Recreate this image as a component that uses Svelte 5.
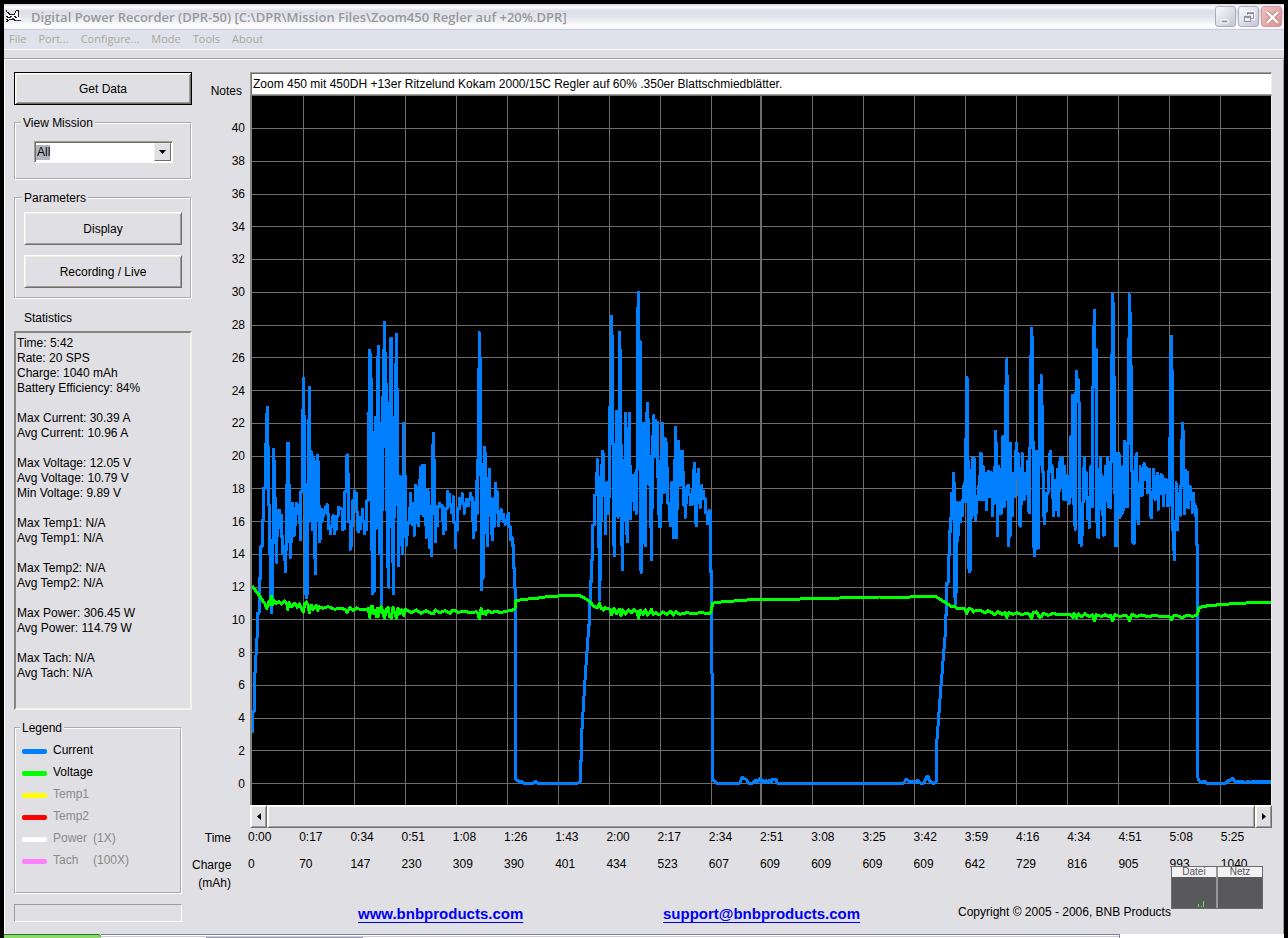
<script>
  const menus = ['File', 'Port…', 'Configure…', 'Mode', 'Tools', 'About'];
  const stats = [
    'Time: 5:42',
    'Rate: 20 SPS',
    'Charge: 1040 mAh',
    'Battery Efficiency: 84%',
    '',
    'Max Current: 30.39 A',
    'Avg Current: 10.96 A',
    '',
    'Max Voltage: 12.05 V',
    'Avg Voltage: 10.79 V',
    'Min Voltage: 9.89 V',
    '',
    'Max Temp1: N/A',
    'Avg Temp1: N/A',
    '',
    'Max Temp2: N/A',
    'Avg Temp2: N/A',
    '',
    'Max Power: 306.45 W',
    'Avg Power: 114.79 W',
    '',
    'Max Tach: N/A',
    'Avg Tach: N/A'
  ].join('\n');
  const legend = [
    { name: 'Current', scale: '', color: '#0080ff', on: true },
    { name: 'Voltage', scale: '', color: '#00ff00', on: true },
    { name: 'Temp1', scale: '', color: '#ffff00', on: false },
    { name: 'Temp2', scale: '', color: '#ff0000', on: false },
    { name: 'Power', scale: '(1X)', color: '#ffffff', on: false },
    { name: 'Tach', scale: '(100X)', color: '#ff80ff', on: false }
  ];
  const levels = Array.from({ length: 21 }, (_, i) => 40 - 2 * i);
  const times = ['0:00', '0:17', '0:34', '0:51', '1:08', '1:26', '1:43', '2:00', '2:17', '2:34', '2:51', '3:08', '3:25', '3:42', '3:59', '4:16', '4:34', '4:51', '5:08', '5:25'];
  const charges = [0, 70, 147, 230, 309, 390, 401, 434, 523, 607, 609, 609, 609, 609, 642, 729, 816, 905, 993, 1040];

  const gridX = Array.from({ length: 19 }, (_, i) => 303 + 51 * i - (i > 8 ? 1 : 0));
  const gridY = levels.map((v) => Math.round(783 - v * 16.375));

  // Traces are sampled per flight; each run carries its own origin, three units to a plot unit.
  const parse = (ox, pts) => pts.trim().split(/\s+/).map((p) => {
    const [x, y] = p.split(',').map(Number);
    return [ox + x / 3, 280 + y / 3];
  });
  const join = (pts) => pts.map(([x, y]) => `${x.toFixed(1)},${y.toFixed(1)}`).join(' ');
  const at = (ox, pts) => join(parse(ox, pts));

  // Steep jumps between neighbouring samples are drawn as upright bars that meet halfway.
  const bars = (ox, pts) => {
    const src = parse(ox, pts);
    const out = [src[0]];
    for (let i = 1; i < src.length; i++) {
      const [x0, y0] = src[i - 1];
      const [x1, y1] = src[i];
      if (x1 - x0 < 3 && Math.abs(y1 - y0) > 3) {
        const mid = (y0 + y1) / 2;
        out.push([x0, mid], [x1, mid]);
      }
      out.push(src[i]);
    }
    return join(out);
  };

  const run1 = bars(248, `12,1359 18,1230 28,1060 33,940 38,850 42,750 47,690 52,560 56,425 58,381 61,620 64,730 67,910 70,998 73,940 75,620 77,507 80,580 83,730 86,847 89,690 92,742 95,690 100,720 104,820 108,800 112,876 116,740 119,490 122,490 125,740 127,832 131,740 134,669 138,768 142,700 146,669 150,700 154,675 158,780 162,490 166,294 169,520 171,700 173,930 176,954 179,930 181,520 184,322 187,720 190,515 194,750 196,530 199,785 202,882 205,560 208,525 212,570 214,785 218,765 222,687 226,707 232,687 238,674 242,730 248,762 252,715 256,707 260,762 265,735 270,682 276,685 282,688 284,750 290,740 294,530 298,525 302,640 306,810 310,785 314,690 320,634 325,645 328,745 332,755 338,735 344,688 350,761 356,735 360,590 364,211 367,230 369,360 371,680 374,942 378,928 380,500 383,412 385,745 388,262 391,199 393,820 396,430 399,975 402,352 404,690 406,292 409,127 412,312 414,690 416,312 419,800 422,922 424,560 426,177 430,175 433,750 437,942 439,480 441,342 446,163 449,490 452,858 457,590 461,770 464,822 467,429 471,740 474,797 478,735 484,728 488,639 493,700 498,767 502,615 506,622 508,720 512,738 515,640 518,562 520,700 522,556 527,708 530,556 533,700 535,772 540,632 545,780 550,828 553,530 556,460 560,620 563,785 568,690 575,669 582,682 587,762 593,735 598,634 604,652 609,698 616,650 622,803 628,700 634,672 642,640 648,702 655,657 662,678 668,640 672,662 677,773 682,728 686,604 688,700 690,380 694,158 698,310 699,860 701,929 705,860 707,600 709,502 713,540 716,720 718,797 722,620 725,568 729,740 733,780 738,700 743,610 748,660 751,737 756,700 760,689 766,715 772,733 778,710 782,699 787,780 792,772 797,820 800,910 803,940 803,1495`);
  const run2 = bars(500, `240,1506 244,1380 255,1200 264,1070 268,1000 270,930 274,880 278,800 283,670 288,620 292,539 295,640 297,960 299,960 302,840 304,600 307,514 311,530 316,762 320,608 323,700 325,688 327,610 329,650 334,109 337,225 340,760 343,828 345,495 347,700 349,394 351,700 354,712 358,157 361,265 363,720 367,870 371,540 373,720 376,400 380,740 383,785 385,490 388,400 392,717 396,605 400,585 404,690 406,580 408,702 411,440 412,130 416,37 420,330 421,860 424,877 427,520 431,430 433,780 437,797 439,430 442,370 446,465 448,590 450,640 454,839 458,530 461,407 465,530 467,422 471,590 473,428 475,660 479,740 482,740 484,600 487,430 491,637 495,475 498,635 500,490 503,640 508,700 511,738 515,608 517,700 519,772 522,540 524,772 526,442 530,772 532,600 535,483 537,600 540,618 542,530 545,514 548,514 551,640 556,712 560,625 565,616 570,673 577,673 580,590 584,550 587,720 589,737 592,600 596,568 601,682 605,617 611,650 616,662 622,732 627,692 631,700 632,870 635,880 636,1480`);
  const run3 = bars(920, `48,1506 50,1390 62,1230 76,1060 79,950 84,870 88,780 92,730 95,700 100,580 103,640 104,930 106,972 109,900 112,668 114,768 119,668 122,726 127,690 130,630 134,608 136,665 139,292 143,300 144,780 146,850 148,876 152,860 154,570 156,660 158,534 162,535 164,690 167,719 170,680 175,620 178,660 180,520 182,650 184,521 187,660 190,560 193,660 196,580 200,690 203,610 205,573 208,650 211,580 214,578 217,707 221,580 223,670 226,454 230,525 233,767 236,560 239,700 241,568 244,700 248,470 252,680 256,320 258,660 260,239 263,340 265,680 266,797 270,740 272,490 275,700 277,707 280,580 283,650 286,540 290,490 294,550 298,735 301,738 303,610 307,521 310,660 313,658 316,580 320,640 322,543 325,690 328,698 331,310 334,145 338,200 340,770 344,828 346,515 348,800 350,515 352,805 355,803 357,315 361,550 364,287 368,470 370,680 373,732 378,660 384,620 388,530 391,514 396,600 401,707 405,600 408,690 412,568 416,707 418,560 421,533 424,620 427,535 431,658 434,560 437,660 441,585 444,665 447,672 450,590 452,470 454,650 457,346 460,620 462,720 466,748 467,405 470,274 474,320 477,410 479,780 483,797 486,740 489,600 493,533 498,620 503,690 508,742 512,560 517,680 517,460 520,184 524,91 528,325 530,680 532,770 536,772 538,600 541,533 546,640 549,765 553,765 556,560 559,620 562,533 566,680 572,683 575,410 577,42 581,100 583,480 585,797 589,797 592,520 594,700 597,521 600,712 603,580 606,702 608,560 610,690 614,484 616,680 619,490 622,680 624,310 628,44 632,155 635,365 637,780 642,792 646,540 650,521 653,700 656,732 660,560 666,648 669,560 672,550 675,600 678,562 682,638 685,570 688,568 690,700 695,714 700,568 703,650 706,658 709,600 712,580 714,690 717,590 720,640 723,582 725,640 728,588 731,678 734,600 737,598 742,678 744,600 747,678 750,270 754,169 758,380 758,720 761,780 764,839 768,608 770,740 773,750 775,640 778,700 782,705 784,530 788,430 791,475 792,690 794,702 797,570 800,680 803,578 806,683 811,620 816,698 821,640 825,708 828,685 830,760 832,830 833,1490`);
  const current = [
    run1,
    '516,780 518,780 520,783 521,781 523,783 534,783 535,781 537,783 578,783',
    run2,
    '712,780 714,780 716,783 740,783 742,777 745,779 747,780 748,783 753,783 756,780 758,782 760,778 762,783 763,780 765,783 766,780 768,783 769,780 771,783 772,779 774,780 776,779 777,783 904,783 906,779 908,780 910,783 912,781 914,783 916,782 918,780 920,783 924,783 926,778 928,776 929,780 932,783 935,783',
    run3,
    '1199,781 1202,783 1204,781 1206,783 1226,783 1229,780 1231,780 1232,778 1234,780 1236,783 1238,781 1240,783 1242,781 1244,783 1246,782 1248,781 1251,783 1253,781 1255,783 1257,781 1259,783 1261,781 1263,783 1265,781 1267,783 1269,781 1272,783'
  ].join(' ');

  const voltage = [
    at(248, `12,918 28,938 42,960 50,970 57,985 62,965 66,975 70,949 74,975 78,960 84,970 92,965 100,972 110,963 116,970 119,988 124,968 130,980 140,970 148,982 154,972 160,985 166,996 170,972 175,966 180,975 184,999 190,975 195,990 204,975 209,991 214,980 225,985 240,980 260,988 275,984 290,988 298,997 306,983 315,992 325,984 340,990 358,988 361,985 365,1012 369,980 373,979 377,1000 381,990 385,1009 388,985 391,1010 395,990 400,980 405,1000 410,1015 414,990 420,982 425,1010 430,1014 435,982 440,1000 446,1014 450,986 455,1000 460,990 467,1006 471,988 480,992 490,998 505,990 520,1000 535,992 545,998 557,1002 562,990 575,998 590,992 605,1000 615,990 630,997 650,994 670,999 685,995 690,1000 694,1016 699,986 704,1000 710,995 713,1003 720,992 730,998 745,993 755,998 770,995 780,993 795,990 801,985 803,962 815,960 840,957`),
    at(500, `110,955 140,950 175,948 215,945 240,947 255,955 270,965 280,978 292,983 298,970 304,985 310,990 315,983 330,988 335,1004 342,985 349,1001 358,988 363,1007 368,990 376,1002 385,990 395,998 402,988 410,995 416,1014 420,990 430,1003 436,990 443,1005 449,998 454,988 460,1003 468,998 478,1005 488,996 500,1003 512,994 520,1005 527,995 540,1003 560,998 580,1001 600,998 625,1000 632,998 638,970 650,967 690,964`),
    '760,599 800,599 840,598 880,597 910,597',
    at(920, `0,950 45,948 60,958 80,970 95,980 102,978 110,985 130,985 135,987 140,1000 148,985 155,988 160,996 170,990 185,993 195,999 205,992 215,998 225,1004 235,995 245,1003 255,998 260,1012 266,998 280,1003 290,998 305,1004 320,1000 328,1003 334,1016 340,998 350,996 357,1011 364,1011 370,1000 385,1006 400,1000 415,1005 425,1003 440,1003 450,1003 458,1012 462,1000 469,1014 475,1002 485,1010 495,1001 508,1010 517,1005 523,1022 529,1004 545,1010 555,1004 566,1011 572,1006 578,1022 584,1004 600,1010 615,1005 622,1010 628,1022 636,1003 650,1010 665,1005 685,1010 705,1006 725,1011 747,1008 754,1020 762,1005 775,1008 787,1013 800,1006 820,1009 828,1006 833,1000 836,985 845,981 870,976 910,974 945,970 1056,967`)
  ].join(' ');

  let notes = $state('Zoom 450 mit 450DH +13er Ritzelund Kokam 2000/15C Regler auf 60% .350er Blattschmiedblätter.');
  let mission = $state('All');
</script>

<div class="screen">
  <div class="window">
    <header class="titlebar">
      <svg class="app-icon" width="17" height="16" viewBox="0 0 17 16" aria-hidden="true">
        <path d="M1 2l4 4 4-1 3-4 2 5 2 4-6 2-5-1-4 1 2-4z" fill="#fff" />
        <g fill="none" stroke="#1a1a1a" shape-rendering="crispEdges">
          <path d="M1 1l1 2 3 2h2l2 1 2-4 2-1 1 5M1 7l3 2 3-2M1 13l3-2 4-1 3 2 5-1M9 7l3 2" />
          <path d="M4 4l3 4M13 6v3M1 10l2 0" stroke-dasharray="2 1" />
        </g>
        <path d="M11 11h5v1h-5zM7 9h2v1H7z" fill="#2a3a90" />
      </svg>
      <h1>Digital Power Recorder (DPR-50) [C:\DPR\Mission Files\Zoom450 Regler auf +20%.DPR]</h1>
      <div class="controls">
        <button class="ctl" aria-label="Minimize">
          <svg width="21" height="21" viewBox="0 0 21 21"><path d="M5 13h7v3H5z" fill="#9a9aa6" stroke="#fff" /></svg>
        </button>
        <button class="ctl" aria-label="Restore">
          <svg width="21" height="21" viewBox="0 0 21 21" fill="none" shape-rendering="crispEdges">
            <path d="M8.500 8V5.500h6v6H12" stroke="#fff" stroke-width="3" />
            <path d="M8.500 8V5.500h6v6H12M8 6h7" stroke="#9292a0" />
            <path d="M5.500 9.500h6v5h-6z" stroke="#9292a0" fill="#ececf2" /><path d="M5 10h7" stroke="#9292a0" />
          </svg>
        </button>
        <button class="ctl close" aria-label="Close">
          <svg width="21" height="21" viewBox="0 0 21 21"><path d="M5 5l11 11M16 5L5 16" stroke="#c08088" stroke-width="4" /><path d="M5 5l11 11M16 5L5 16" stroke="#fff" stroke-width="2.400" /></svg>
        </button>
      </div>
    </header>
    <nav class="menubar">
      {#each menus as m}<button>{m}</button>{/each}
    </nav>
    <div class="toolstrip"></div>

    <main>
      <aside>
        <button class="btn default">Get Data</button>

        <fieldset class="mission">
          <legend>View Mission</legend>
          <div class="combo">
            <select bind:value={mission} aria-label="View Mission"><option>All</option></select>
            <span class="drop" aria-hidden="true"><svg width="7" height="4" viewBox="0 0 7 4"><path d="M0 0h7L3.500 4z" /></svg></span>
          </div>
        </fieldset>

        <fieldset class="params">
          <legend>Parameters</legend>
          <button class="btn">Display</button>
          <button class="btn">Recording / Live</button>
        </fieldset>

        <section class="stats">
          <h2>Statistics</h2>
          <div class="box">{stats}</div>
        </section>

        <fieldset class="legend">
          <legend>Legend</legend>
          <ul>
            {#each legend as l}
              <li class:off={!l.on}>
                <i style="background:{l.color}"></i><span class="name">{l.name}</span><span>{l.scale}</span>
              </li>
            {/each}
          </ul>
        </fieldset>

        <div class="status"></div>
      </aside>

      <section class="chart">
        <label for="notes">Notes</label>
        <input id="notes" bind:value={notes} />

        <div class="levels">
          {#each levels as v}<span>{v}</span>{/each}
        </div>
        <div class="plot">
          <svg viewBox="252 96 1019 709" preserveAspectRatio="none" role="img" aria-label="Current and voltage over time">
            <g stroke="#6e6e6e" shape-rendering="crispEdges">
              {#each gridX as x}
                <path d="M{x === 761 ? x : x + 0.5} 96V805" vector-effect="non-scaling-stroke" stroke-width={x === 761 ? 2 : 1} />
              {/each}
              {#each gridY as y}
                <path d="M252 {y + 0.5}H1272" vector-effect="non-scaling-stroke" />
              {/each}
            </g>
            <polyline points={current} stroke="#0080ff" />
            <polyline points={voltage} stroke="#00ff00" />
          </svg>
        </div>

        <div class="scroll">
          <button aria-label="Scroll left"><svg width="4" height="7" viewBox="0 0 4 7"><path d="M4 0v7L0 3.500z" /></svg></button>
          <div class="thumb"></div>
          <button aria-label="Scroll right"><svg width="4" height="7" viewBox="0 0 4 7"><path d="M0 0v7l4-3.500z" /></svg></button>
        </div>

        <span class="row-label">Time</span>
        <div class="ticks">{#each times as t}<span>{t}</span>{/each}</div>
        <span class="row-label charge">Charge<br />(mAh)</span>
        <div class="ticks charge">{#each charges as c}<span>{c}</span>{/each}</div>

        <footer>
          <a href="http://www.bnbproducts.com">www.bnbproducts.com</a>
          <a href="mailto:support@bnbproducts.com">support@bnbproducts.com</a>
          <small>Copyright © 2005 - 2006, BNB Products</small>
        </footer>
      </section>

      <div class="monitor">
        <div><b>Datei</b><svg width="20" height="8" viewBox="0 0 20 8"><path d="M2 4h1v3H2zM5 6h1v1H5zM7 1h1v6H7z" fill="#58e858" /></svg></div>
        <div><b>Netz</b></div>
      </div>
    </main>

    <div class="taskbar"><div class="start"></div><div class="tasks"><i></i></div></div>
  </div>
</div>

<style>
  :global(body) {
    margin: 0;
    background: #000;
  }
  .screen {
    min-height: 100vh;
    box-sizing: border-box;
    padding: 4px 4px 0;
    display: flex;
    background: #000;
    font: 12px/16px 'Liberation Sans', Arial, sans-serif;
    color: #000;
  }
  .screen :is(button, input, select) {
    font: inherit;
    color: inherit;
    margin: 0;
    border-radius: 0;
    box-sizing: border-box;
  }
  .window {
    flex: 1;
    min-width: 0;
    display: flex;
    flex-direction: column;
    background: #e0dfe3;
  }
  .titlebar {
    height: 25px;
    display: flex;
    align-items: center;
    padding: 0 2px 0 1px;
    border-bottom: 1px solid #c9cbdc;
    background: linear-gradient(#d4d4e2 0, #fff 12%, #dddde8 28%, #e6e6ee 55%, #fff 90%, #f4f4fa 100%);
  }
  .app-icon {
    flex: none;
  }
  h1 {
    flex: 1;
    margin: 0 0 0 9px;
    font: 600 13px/20px 'Open Sans', 'Trebuchet MS', sans-serif;
    color: #98989a;
    white-space: nowrap;
    overflow: hidden;
  }
  .controls {
    display: flex;
    gap: 2px;
  }
  .ctl {
    width: 21px;
    height: 21px;
    padding: 0;
    border: 1px solid #a9adbf;
    background: linear-gradient(135deg, #fafafd, #c4c4d4);
    display: grid;
    place-items: center;
    overflow: hidden;
  }
  .screen .ctl {
    border-radius: 3px;
  }
  .ctl.close {
    border-color: #d09a9e;
    background: linear-gradient(135deg, #ecc2c0, #dc9494);
  }
  .menubar {
    height: 19px;
    display: flex;
    gap: 12px;
    padding: 0 5px;
    border-bottom: 1px solid #fff;
    background: #dfe2ec;
  }
  .screen .menubar button {
    height: 17px;
    border: 0;
    background: none;
    padding: 0;
    color: #aca899;
    font: 11px/16px 'Open Sans', Tahoma, sans-serif;
  }
  .toolstrip {
    height: 8px;
    border-bottom: 1px solid #9d9da1;
  }
  main {
    flex: 1;
    position: relative;
    display: flex;
    align-items: stretch;
    border-left: 1px solid #fff;
    border-top: 1px solid #fff;
    border-right: 1px solid #9d9da1;
    padding: 12px 11px 10px 9px;
  }
  aside {
    width: 178px;
    flex: none;
    display: flex;
    flex-direction: column;
    gap: 10px;
  }
  .btn {
    width: 100%;
    height: 33px;
    border: 1px solid;
    border-color: #fff #716f64 #716f64 #fff;
    background: #e0dfe3;
    box-shadow: inset 1px 1px #f1efe2, inset -1px -1px #9d9da1;
    padding: 0;
  }
  .btn.default {
    border-color: #000;
    box-shadow: inset 1px 1px #fff, inset -1px -1px #716f64, inset 2px 2px #f1efe2, inset -2px -2px #9d9da1;
  }
  fieldset {
    margin: 0;
    min-width: 0;
    border: 2px groove #fff;
    padding: 0;
  }
  legend {
    margin-left: -2px;
    padding: 0 2px;
  }
  .mission {
    padding: 10px 17px 15px 18px;
  }
  .mission legend {
    margin-left: -13px;
  }
  .combo {
    position: relative;
    height: 22px;
  }
  .combo select {
    display: block;
    appearance: none;
    width: 100%;
    height: 22px;
    border: 1px solid;
    border-color: #9d9da1 #fff #fff #9d9da1;
    box-shadow: inset 1px 1px #716f64;
    padding: 0 2px;
    background: linear-gradient(#b2b4bf, #b2b4bf) 1px 3px / 14px 15px no-repeat #fff;
    outline: 0;
  }
  .drop {
    position: absolute;
    right: 2px;
    top: 2px;
    width: 15px;
    bottom: 2px;
    display: grid;
    place-items: center;
    background: #e0dfe3;
    border: 1px solid;
    border-color: #f1efe2 #716f64 #716f64 #f1efe2;
    pointer-events: none;
  }
  .params {
    display: flow-root;
    padding: 6px 8px 9px 8px;
  }
  .params .btn {
    display: block;
  }
  .params .btn + .btn {
    margin-top: 10px;
  }
  .stats h2 {
    margin: 0;
    padding: 1px 0 5px 10px;
    font: inherit;
  }
  .box {
    padding: 3px 1px 27px;
    border: 2px solid;
    border-color: #85857f #f4f3ea #f4f3ea #85857f;
    line-height: 15px;
    white-space: pre-line;
  }
  .legend {
    margin-right: 10px;
    padding: 3px 6px 21px;
  }
  ul {
    list-style: none;
    margin: 0;
    padding: 0;
  }
  li {
    display: flex;
    align-items: center;
    height: 22px;
  }
  li i {
    width: 25px;
    height: 5px;
    border-radius: 2px;
    margin: 2px 6px 0 0;
  }
  li .name {
    width: 40px;
  }
  li.off {
    color: #8a8a8a;
  }
  .status {
    height: 16px;
    margin-right: 10px;
    border: 1px solid;
    border-color: #9d9da1 #fff #fff #9d9da1;
  }
  .chart {
    flex: 1;
    min-width: 0;
    display: grid;
    grid-template-columns: 58px 1fr;
    grid-template-rows: 23px 1fr 23px 18px 46px 32px;
  }
  label {
    text-align: right;
    padding: 11px 8px 0 0;
  }
  #notes {
    width: 100%;
    min-width: 0;
    height: 23px;
    border: 1px solid;
    border-color: #9d9da1 #f1efe2 #9d9da1 #9d9da1;
    box-shadow: inset 1px 1px #716f64;
    padding: 0 2px;
    background: #fff;
    outline: 0;
  }
  .levels {
    display: flex;
    flex-direction: column;
    padding: 17px 5px 5px 0;
    text-align: right;
  }
  .levels span {
    flex: 1;
    display: flex;
    align-items: center;
    justify-content: flex-end;
  }
  .plot {
    position: relative;
    border-left: 2px solid #85857f;
    border-top: 1px solid #716f64;
    border-right: 1px solid #f1efe2;
    background: #000;
  }
  .plot svg {
    position: absolute;
    inset: 0;
    width: 100%;
    height: 100%;
  }
  .plot polyline {
    fill: none;
    stroke-width: 3px;
    stroke-linejoin: round;
    shape-rendering: crispEdges;
    vector-effect: non-scaling-stroke;
  }
  .scroll {
    grid-column: 2;
    display: flex;
  }
  .scroll button,
  .thumb {
    border: 1px solid;
    border-color: #fff #716f64 #716f64 #fff;
    box-shadow: inset 1px 1px #fdfcf4, inset -1px -1px #9d9da1;
    background: #e0dfe3;
  }
  .scroll button {
    width: 17px;
    padding: 0;
    display: grid;
    place-items: center;
  }
  .thumb {
    flex: 1;
  }
  .row-label {
    text-align: right;
    line-height: 18px;
    padding-right: 19px;
    padding-top: 1px;
  }
  .row-label.charge {
    padding-top: 10px;
  }
  .ticks {
    display: grid;
    grid-template-columns: repeat(20, minmax(0, 1fr));
    margin-left: -2px;
    line-height: 18px;
  }
  .ticks.charge {
    padding-top: 9px;
  }
  footer {
    grid-column: 2;
    display: grid;
    grid-template-columns: 305fr 295fr 314fr;
    padding: 12px 0 0 108px;
    line-height: 20px;
    white-space: nowrap;
  }
  footer a {
    color: #0000f0;
    font-size: 15px;
    font-weight: bold;
    text-underline-offset: 3px;
  }
  small {
    font-size: 12px;
    line-height: 16px;
  }
  .monitor {
    position: absolute;
    right: 20px;
    bottom: 25px;
    width: 92px;
    height: 43px;
    box-sizing: border-box;
    display: grid;
    grid-template-columns: 1fr 1fr;
    gap: 2px;
    border: 1px solid #6a6a6c;
    background: rgba(150, 148, 145, 0.95);
  }
  .monitor div {
    display: flex;
    flex-direction: column;
    background: #59595b;
  }
  .monitor b {
    height: 10px;
    font: 10px/10px 'Liberation Sans', Arial, sans-serif;
    text-align: center;
    color: #555;
    background: #f2f2f5;
  }
  .monitor svg {
    margin: auto 0 0 24px;
  }
  .taskbar {
    height: 4px;
    display: flex;
    background: linear-gradient(90deg, transparent 1116px, #fff 1116px);
  }
  .start {
    width: 97px;
    border-top: 1px solid #1d7a1d;
    border-top-right-radius: 3px;
    background: #8fd66f;
    box-sizing: border-box;
  }
  .tasks {
    flex: 0 1 1019px;
    box-sizing: border-box;
    border-top: 1px solid #7c7f9a;
    border-right: 1px solid #7c7f9a;
    background: linear-gradient(#fff 1px, #c8c8d8 1px 2px, #fff 2px);
  }
  .tasks i {
    display: block;
    margin: 2px 0 0 105px;
    width: 157px;
    height: 1px;
    background: #9a9aa6;
  }
</style>
